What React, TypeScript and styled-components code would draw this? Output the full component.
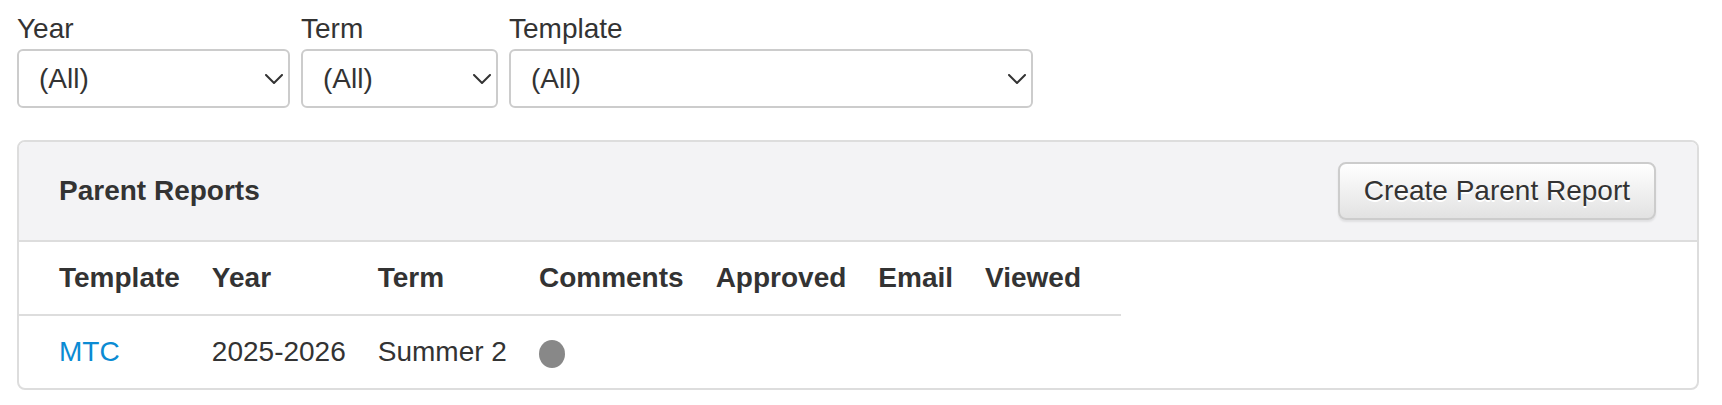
import styled, { createGlobalStyle } from "styled-components";

const GlobalStyle = createGlobalStyle`
  body {
    margin: 0;
    background: #fff;
    color: #333;
    font-family: "Liberation Sans", Arial, sans-serif;
  }
`;

const filters = [
  { label: "Year", width: 273 },
  { label: "Term", width: 197 },
  { label: "Template", width: 524 },
];

const columns = ["Template", "Year", "Term", "Comments", "Approved", "Email", "Viewed"];

const Chevron = () => (
  <svg width="18" height="10" viewBox="0 0 18 10" fill="none">
    <path d="M1 1l8 8 8-8" stroke="#333" strokeWidth="2" strokeLinecap="round" strokeLinejoin="round" />
  </svg>
);

const App = () => {
  return (
    <Page>
      <GlobalStyle />
      <Filters>
        {filters.map((f) => (
          <FilterGroup key={f.label} $width={f.width}>
            <Label>{f.label}</Label>
            <SelectWrap>
              <Select defaultValue="all">
                <option value="all">(All)</option>
              </Select>
              <Arrow>
                <Chevron />
              </Arrow>
            </SelectWrap>
          </FilterGroup>
        ))}
      </Filters>

      <Panel>
        <PanelHeading>
          <PanelTitle>Parent Reports</PanelTitle>
          <Button>Create Parent Report</Button>
        </PanelHeading>
        <Table>
          <thead>
            <tr>
              {columns.map((c) => (
                <th key={c}>{c}</th>
              ))}
            </tr>
          </thead>
          <tbody>
            <tr>
              <td>
                <Link href="#">MTC</Link>
              </td>
              <td>2025-2026</td>
              <td>Summer 2</td>
              <td>
                <Dot />
              </td>
              <td></td>
              <td></td>
              <td></td>
            </tr>
          </tbody>
        </Table>
      </Panel>
    </Page>
  );
};

const Page = styled.div`
  padding: 10px 23px 0 17px;
`;

const Filters = styled.div`
  display: flex;
  gap: 11px;
`;

const FilterGroup = styled.div<{ $width: number }>`
  display: flex;
  flex-direction: column;
  width: ${(p) => p.$width}px;
`;

const Label = styled.label`
  display: block;
  height: 38px;
  line-height: 38px;
  font-size: 28px;
  margin-bottom: 1px;
`;

const SelectWrap = styled.div`
  position: relative;
`;

const Select = styled.select`
  appearance: none;
  width: 100%;
  height: 59px;
  box-sizing: border-box;
  border: 2px solid #ccc;
  border-radius: 6px;
  background: #fff;
  color: #333;
  font-family: inherit;
  font-size: 28px;
  padding: 0 40px 0 20px;
  outline: none;
`;

const Arrow = styled.span`
  position: absolute;
  right: 7px;
  top: 50%;
  transform: translateY(-50%);
  display: flex;
  pointer-events: none;
`;

const Panel = styled.div`
  margin-top: 32px;
  border: 2px solid #ddd;
  border-radius: 8px;
  overflow: hidden;
  background: #fff;
`;

const PanelHeading = styled.div`
  display: flex;
  align-items: center;
  justify-content: space-between;
  padding: 20px 41px 20px 40px;
  background: #f3f3f5;
  border-bottom: 2px solid #ddd;
`;

const PanelTitle = styled.h3`
  margin: 0;
  font-size: 28px;
  font-weight: bold;
  color: #333;
`;

const Button = styled.button`
  height: 58px;
  padding: 0 24px;
  border: 2px solid #ccc;
  border-radius: 8px;
  background: linear-gradient(to bottom, #fff 0%, #e2e2e2 100%);
  box-shadow: 0 2px 2px rgba(0, 0, 0, 0.08);
  text-shadow: 0 2px 0 #fff;
  color: #333;
  font-family: inherit;
  font-size: 28px;
  cursor: pointer;
`;

const Table = styled.table`
  border-collapse: collapse;
  font-size: 28px;
  line-height: 40px;

  th,
  td {
    padding: 16px;
    text-align: left;
    vertical-align: middle;
    white-space: nowrap;
  }

  th:first-child,
  td:first-child {
    padding-left: 40px;
  }

  th:last-child,
  td:last-child {
    padding-right: 40px;
  }

  thead th {
    font-weight: bold;
    border-bottom: 2px solid #ddd;
  }
`;

const Link = styled.a`
  color: #0b8bd3;
  text-decoration: none;
`;

const Dot = styled.span`
  display: inline-block;
  width: 26px;
  height: 28px;
  border-radius: 50%;
  background: #888;
  vertical-align: middle;
`;

export default App;
